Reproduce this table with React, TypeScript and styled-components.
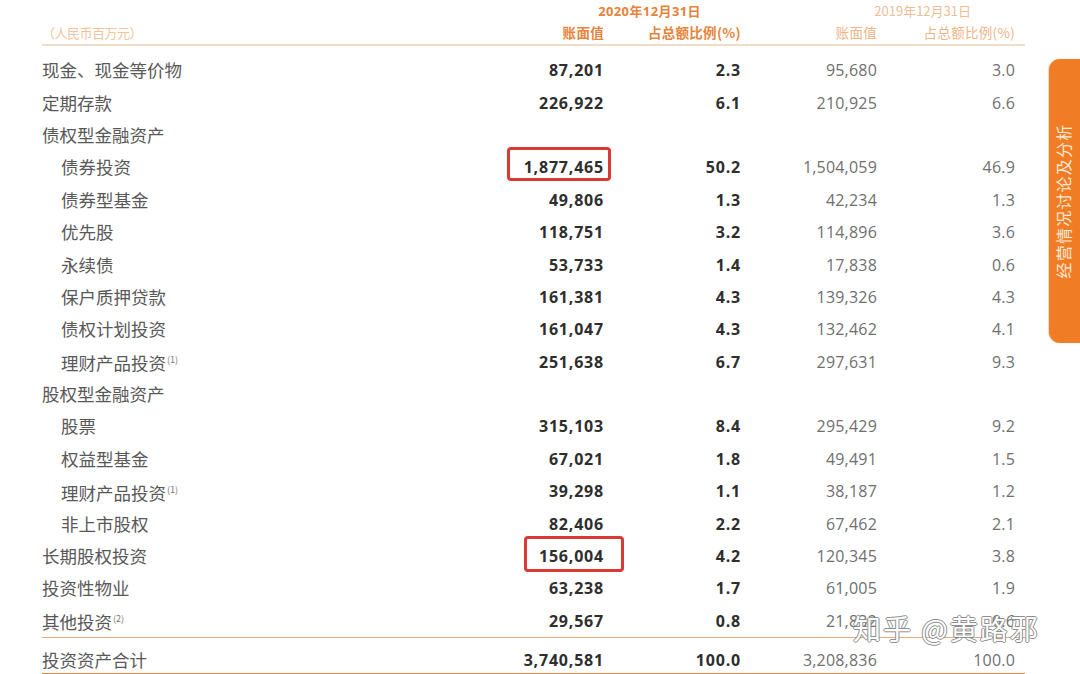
import React from "react";
import styled, { createGlobalStyle } from "styled-components";

const Global = createGlobalStyle`
  html, body { margin: 0; padding: 0; background: #ffffff; }
  body { width: 1080px; height: 674px; overflow: hidden; }
  #root { position: relative; width: 1080px; height: 674px; }
`;

const Page = styled.div`
  position: relative;
  width: 1080px;
  height: 674px;
  padding-left: 42px;
  box-sizing: border-box;
  font-family: "Noto Sans CJK SC", "Noto Sans", sans-serif;
`;

const Table = styled.div`
  width: 983px;
  display: flex;
  flex-direction: column;
`;

const COLS = "438px 124px 137px 136px 138px";

const HeadRow = styled.div<{ $h: number; $line?: boolean }>`
  display: grid;
  grid-template-columns: ${COLS};
  height: ${(p) => p.$h}px;
  align-items: center;
  ${(p) => (p.$line ? "border-bottom: 2px solid #f3dcc6;" : "")}
`;

const DateCell = styled.div<{ $col: string; $pr: number; $light?: boolean }>`
  grid-column: ${(p) => p.$col};
  text-align: right;
  padding-right: ${(p) => p.$pr}px;
  font-family: ${(p) => (p.$light ? '"Noto Sans CJK SC"' : '"Open Sans", "Noto Sans CJK SC"')}, sans-serif;
  font-size: 13px;
  font-weight: ${(p) => (p.$light ? 400 : 700)};
  letter-spacing: ${(p) => (p.$light ? 0 : 0.4)}px;
  color: ${(p) => (p.$light ? "#eebd96" : "#e8833a")};
`;

const UnitCell = styled.div`
  font-size: 13px;
  color: #f0c49c;
  letter-spacing: -0.5px;
`;

const HeadCell = styled.div<{ $light?: boolean }>`
  text-align: right;
  font-size: 13.5px;
  font-weight: ${(p) => (p.$light ? 400 : 700)};
  color: ${(p) => (p.$light ? "#efb488" : "#e8833a")};
  letter-spacing: 0.3px;
`;

const Body = styled.div`
  padding-top: 8px;
  display: flex;
  flex-direction: column;
`;

const Row = styled.div<{ $total?: boolean }>`
  display: grid;
  grid-template-columns: ${COLS};
  align-items: center;
  height: 32.4px;
  ${(p) =>
    p.$total
      ? `border-top: 1px solid #e9a978; border-bottom: 2px solid #e38a4c; padding-top: 10px; box-sizing: border-box; height: 38px; align-items: start;`
      : ""}
`;

const Label = styled.div<{ $indent?: boolean }>`
  padding-left: ${(p) => (p.$indent ? 19 : 0)}px;
  font-size: 17.5px;
  font-weight: 400;
  color: #585858;
  white-space: nowrap;
  line-height: 24px;
`;

const Note = styled.sup`
  font-size: 9px;
  color: #777;
  vertical-align: 7px;
  margin-left: 1px;
`;

const Num = styled.div<{ $bold?: boolean }>`
  position: relative;
  text-align: right;
  font-family: "Open Sans", "Liberation Sans", sans-serif;
  font-size: 16px;
  line-height: 24px;
  letter-spacing: ${(p) => (p.$bold ? 0.8 : 0.2)}px;
  font-weight: ${(p) => (p.$bold ? 700 : 400)};
  color: ${(p) => (p.$bold ? "#2e2e2e" : "#6f6f6f")};
`;

const Mark = styled.span<{ $l: number; $r: number; $t: number; $b: number }>`
  position: absolute;
  left: ${(p) => p.$l}px;
  right: ${(p) => p.$r}px;
  top: ${(p) => p.$t}px;
  bottom: ${(p) => p.$b}px;
  border: 3px solid #d93a35;
  border-radius: 4px;
  pointer-events: none;
`;

const SideTab = styled.div`
  position: absolute;
  left: 1049px;
  top: 59px;
  width: 40px;
  height: 284px;
  background: #f07d26;
  border-radius: 11px 0 0 11px;
  box-shadow: -1px 0 1px rgba(240, 125, 38, 0.3);
  display: flex;
  align-items: center;
  justify-content: center;
`;

const TabText = styled.span`
  display: block;
  transform: rotate(-90deg);
  margin-left: -12px;
  white-space: nowrap;
  color: #fde9d8;
  font-size: 16px;
  letter-spacing: 1.2px;
`;

const Watermark = styled.div`
  position: absolute;
  left: 853px;
  top: 608px;
  font-size: 28px;
  letter-spacing: 2px;
  color: #ffffff;
  white-space: nowrap;
  text-shadow: 1px 0 0 #888, -1px 0 0 #888, 0 1px 0 #888, 0 -1px 0 #888;
  opacity: 0.95;
`;

type R = {
  label: string;
  indent?: boolean;
  note?: string;
  v?: [string, string, string, string];
  mark?: { l: number; r: number; t: number; b: number };
};

const rows: R[] = [
  { label: "现金、现金等价物", v: ["87,201", "2.3", "95,680", "3.0"] },
  { label: "定期存款", v: ["226,922", "6.1", "210,925", "6.6"] },
  { label: "债权型金融资产" },
  { label: "债券投资", indent: true, v: ["1,877,465", "50.2", "1,504,059", "46.9"], mark: { l: 27, r: -7, t: -8, b: -2 } },
  { label: "债券型基金", indent: true, v: ["49,806", "1.3", "42,234", "1.3"] },
  { label: "优先股", indent: true, v: ["118,751", "3.2", "114,896", "3.6"] },
  { label: "永续债", indent: true, v: ["53,733", "1.4", "17,838", "0.6"] },
  { label: "保户质押贷款", indent: true, v: ["161,381", "4.3", "139,326", "4.3"] },
  { label: "债权计划投资", indent: true, v: ["161,047", "4.3", "132,462", "4.1"] },
  { label: "理财产品投资", indent: true, note: "(1)", v: ["251,638", "6.7", "297,631", "9.3"] },
  { label: "股权型金融资产" },
  { label: "股票", indent: true, v: ["315,103", "8.4", "295,429", "9.2"] },
  { label: "权益型基金", indent: true, v: ["67,021", "1.8", "49,491", "1.5"] },
  { label: "理财产品投资", indent: true, note: "(1)", v: ["39,298", "1.1", "38,187", "1.2"] },
  { label: "非上市股权", indent: true, v: ["82,406", "2.2", "67,462", "2.1"] },
  { label: "长期股权投资", v: ["156,004", "4.2", "120,345", "3.8"], mark: { l: 44, r: -20, t: -8, b: -4 } },
  { label: "投资性物业", v: ["63,238", "1.7", "61,005", "1.9"] },
  { label: "其他投资", note: "(2)", v: ["29,567", "0.8", "21,832", "0.6"] },
];

function DataRow({ r }: { r: R }) {
  return (
    <Row>
      <Label $indent={r.indent}>
        {r.label}
        {r.note && <Note>{r.note}</Note>}
      </Label>
      {r.v && (
        <>
          <Num $bold>
            {r.v[0]}
            {r.mark && <Mark $l={r.mark.l} $r={r.mark.r} $t={r.mark.t} $b={r.mark.b} />}
          </Num>
          <Num $bold>{r.v[1]}</Num>
          <Num>{r.v[2]}</Num>
          <Num>{r.v[3]}</Num>
        </>
      )}
    </Row>
  );
}

export default function App() {
  return (
    <>
      <Global />
      <Page>
        <Table>
          <HeadRow $h={20}>
            <DateCell $col="2 / 4" $pr={40}>2020年12月31日</DateCell>
            <DateCell $col="4 / 6" $pr={44} $light>2019年12月31日</DateCell>
          </HeadRow>
          <HeadRow $h={24} $line>
            <UnitCell>（人民币百万元）</UnitCell>
            <HeadCell>账面值</HeadCell>
            <HeadCell>占总额比例(%)</HeadCell>
            <HeadCell $light>账面值</HeadCell>
            <HeadCell $light>占总额比例(%)</HeadCell>
          </HeadRow>
          <Body>
            {rows.map((r, i) => (
              <DataRow key={i} r={r} />
            ))}
            <Row $total>
              <Label>投资资产合计</Label>
              <Num $bold>3,740,581</Num>
              <Num $bold>100.0</Num>
              <Num>3,208,836</Num>
              <Num>100.0</Num>
            </Row>
          </Body>
        </Table>
        <SideTab>
          <TabText>经营情况讨论及分析</TabText>
        </SideTab>
        <Watermark>知乎 @黄路邪</Watermark>
      </Page>
    </>
  );
}
